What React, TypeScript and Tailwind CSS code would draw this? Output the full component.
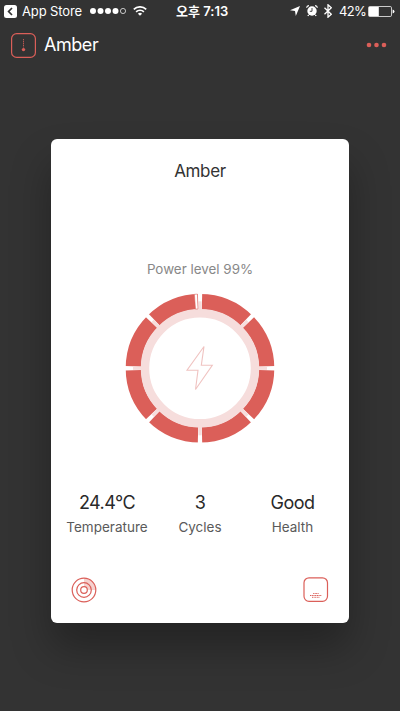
import React from "react";

interface Stat {
    label: string;
    value: string;
    width: string;
}

const RED = "#db5f59";
const PALE = "#f6dddc";

const stats: Stat[] = [
    { label: "Temperature", value: "24.4°C", width: "w-[93px]" },
    { label: "Cycles", value: "3", width: "w-[93px]" },
    { label: "Health", value: "Good", width: "w-[92px]" },
];

// --- STATUS BAR ---
const StatusBar = () => (
    <div className="grid h-[22px] grid-cols-[1fr_auto_1fr] items-center text-[13px] leading-[22px]">
        <div className="flex items-center pl-1">
            <svg width="13" height="13" viewBox="0 0 13 13">
                <rect width="13" height="13" rx="2.5" fill="#fff" />
                <path d="M8 3 L4.6 6.5 L8 10" fill="none" stroke="#333" strokeWidth="1.7" />
            </svg>
            <span className="ml-[5px] w-[60px] text-[13px] tracking-[-0.01em] whitespace-nowrap">App Store</span>
            <svg className="ml-2" width="36" height="8" viewBox="0 0 36 8">
                {[3, 10.5, 18, 25.5].map((cx) => (
                    <circle key={cx} cx={cx} cy="4" r="3" fill="#fff" />
                ))}
                <circle cx="33" cy="4" r="2.6" fill="none" stroke="#fff" strokeWidth="0.7" />
            </svg>
            <svg className="ml-[7px]" width="14" height="10" viewBox="0 0 14 10">
                <path d="M0.8 3.4 A8.8 8.8 0 0 1 13.2 3.4" fill="none" stroke="#fff" strokeWidth="1.7" />
                <path d="M3.1 5.9 A5.5 5.5 0 0 1 10.9 5.9" fill="none" stroke="#fff" strokeWidth="1.6" />
                <path d="M4.9 7.7 A3 3 0 0 1 9.1 7.7 L7 9.8 Z" fill="#fff" />
            </svg>
        </div>
        <span className="w-[50px] pl-[1px] text-center font-semibold whitespace-nowrap">오후 7:13</span>
        <div className="flex items-center justify-end pr-[5px]">
            <svg width="10" height="10" viewBox="0 0 10 10">
                <path d="M10 0 L5.8 10 L5 5 L0 4.2 Z" fill="#fff" />
            </svg>
            <svg className="ml-[6px]" width="12" height="12" viewBox="0 0 12 12">
                <circle cx="6" cy="6" r="4.7" fill="#fff" />
                <path d="M0.6 2.7 A2.4 2.4 0 0 1 3 0.6 M9 0.6 A2.4 2.4 0 0 1 11.4 2.7 M2.7 9.8 L1.8 11 M9.3 9.8 L10.2 11" fill="none" stroke="#fff" strokeWidth="1.2" />
                <path d="M6 3 V6.3 H3.8" fill="none" stroke="#333" strokeWidth="0.9" />
            </svg>
            <svg className="ml-[6px]" width="8" height="14" viewBox="0 0 8 14">
                <path d="M0.5 3.8 L7.3 10.2 L4 13.2 V0.8 L7.3 3.8 L0.5 10.2" fill="none" stroke="#fff" strokeWidth="1.3" />
            </svg>
            <span className="ml-[7px] w-[26px] text-[13px] tracking-[-0.05em] whitespace-nowrap">42%</span>
            <svg className="ml-[3px]" width="27" height="11" viewBox="0 0 27 11">
                <rect x="0.5" y="0.5" width="23" height="10" rx="1.3" fill="none" stroke="#fff" strokeOpacity="0.75" />
                <rect x="1" y="1" width="9.8" height="9" fill="#fff" />
                <path d="M24.6 3.4 Q26.5 3.8 26.5 5.5 Q26.5 7.2 24.6 7.6 Z" fill="#fff" />
            </svg>
        </div>
    </div>
);

// --- BATTERY RING ---
const PowerRing = () => (
    <svg width="150" height="150" viewBox="-75 -75.3 150 150">
        <circle r="66.6" fill="none" stroke={RED} strokeWidth="15.4" />
        <circle r="55" fill="none" stroke={PALE} strokeWidth="8.4" />

        {/* gaps between the eight segments */}
        {[0, 45, 90, 135, 180, 225, 270, 315].map((angle) => (
            <g key={angle} transform={`rotate(${angle})`}>
                <path d="M-2.2 -75 H2.2 L1.8 -59 H-1.8 Z" fill="#fff" />
                <path d="M-1.6 -67 H1.6 L1.6 -58 H-1.6 Z" fill={PALE} />
            </g>
        ))}

        {/* the drained percent */}
        <path d="M-5.6 -74 L-2.6 -74.2 L-2 -59.4 L-4.5 -59.2 Z" fill="#fff" stroke={RED} strokeWidth="0.5" />

        <path d="M4 -21.8 L-13 1.9 H-2 L-4.5 21.2 L12.3 -3 H1.3 Z" fill="none" stroke="#f0c3c1" strokeWidth="1.1" />
    </svg>
);

const CircleIcon = () => (
    <svg width="26" height="26" viewBox="0 0 26 26" fill="none" stroke={RED} strokeWidth="1.2">
        <path d="M13 13 V1 A12 12 0 0 1 25 13 Z" fill="#f5d1cf" stroke="none" />
        <circle cx="13" cy="13" r="3.3" fill="#fff" />
        <circle cx="13" cy="13" r="7.3" />
        <circle cx="13" cy="13" r="11.8" />
    </svg>
);

const CaseIcon = () => (
    <svg width="26" height="26" viewBox="0 0 26 26" fill="none" stroke={RED}>
        <rect x="1" y="0.8" width="23.5" height="23.5" rx="5" strokeWidth="1.2" />
        <path d="M10.2 16.5 H15.6" strokeDasharray="1 0.5" />
        <path d="M7 18.5 H18.3" strokeDasharray="1.2 0.5" />
        <path d="M9 20.3 H16.5" strokeDasharray="1 0.6" />
    </svg>
);

export default function App() {
    return (
        <div className="h-[711px] w-[400px] overflow-hidden bg-[#333333] font-['Inter','Noto_Sans_CJK_KR',sans-serif] text-white">
            <StatusBar />

            <header className="flex h-[46px] items-center pr-[13px] pl-[11px]">
                <svg width="25" height="25" viewBox="0 0 25 25">
                    <rect x="0.6" y="0.6" width="23.8" height="23.8" rx="5" fill="none" stroke={RED} strokeWidth="1.2" />
                    <path d="M12.5 6 V14.5" stroke={RED} strokeWidth="0.8" strokeDasharray="1.4 0.6" />
                    <circle cx="12.5" cy="16.6" r="1.7" fill={RED} />
                </svg>
                <h1 className="ml-2 text-[18px] leading-6 tracking-[-0.025em]">Amber</h1>
                <svg className="ml-auto" width="21" height="6" viewBox="0 0 21 6" fill={RED}>
                    <circle cx="3" cy="3" r="2.3" />
                    <circle cx="10.5" cy="3" r="2.3" />
                    <circle cx="18" cy="3" r="2.3" />
                </svg>
            </header>

            {/* --- DEVICE CARD --- */}
            <main className="mx-auto mt-[71px] flex h-[484px] w-[298px] flex-col items-center rounded-md bg-white shadow-[0_25px_40px_rgba(0,0,0,0.3)]">
                <h2 className="mt-[21px] text-[17px] leading-[22px] tracking-[-0.02em] text-[#333333]">Amber</h2>
                <p className="mt-[78px] text-[13.4px] leading-[18px] text-[#888888]">Power level 99%</p>
                <div className="mt-[15px] h-[150px]">
                    <PowerRing />
                </div>

                <div className="mt-12 flex w-full pl-[9.5px]">
                    {stats.map((stat) => (
                        <div key={stat.label} className={`${stat.width} text-center whitespace-nowrap`}>
                            <div className="text-[18px] leading-6 tracking-[-0.03em] text-[#292929]">{stat.value}</div>
                            <div className="mt-[2px] text-[13.5px] leading-5 text-[#5a5a5a]">{stat.label}</div>
                        </div>
                    ))}
                </div>

                <div className="mt-auto mb-5 flex w-full justify-between px-5">
                    <CircleIcon />
                    <CaseIcon />
                </div>
            </main>
        </div>
    );
}
